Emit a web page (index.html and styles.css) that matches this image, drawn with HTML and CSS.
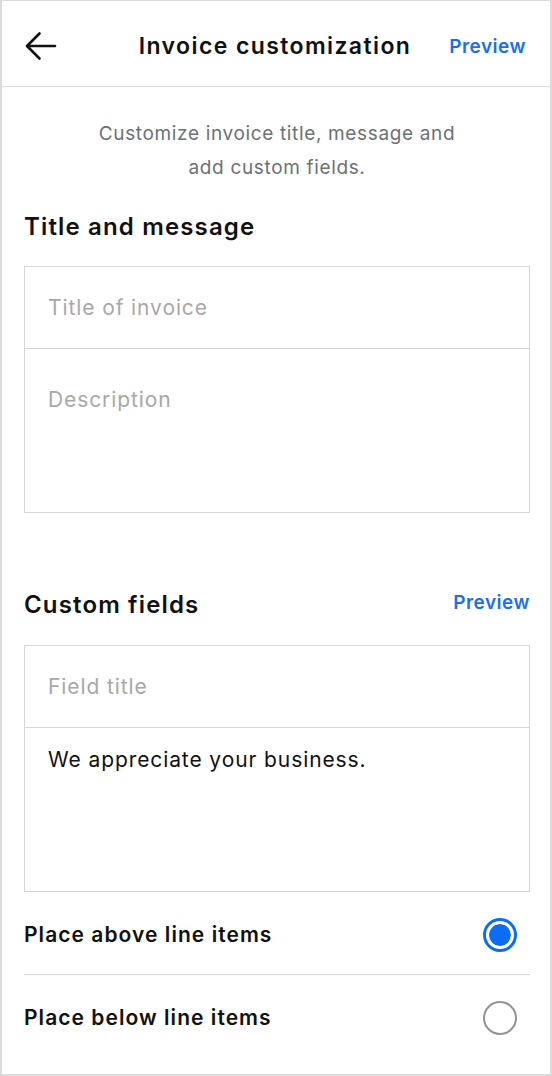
FILE: index.html
```html
<!DOCTYPE html>
<html lang="en">
<head>
  <meta charset="UTF-8"/>
  <meta name="viewport" content="width=device-width, initial-scale=1"/>
  <title>Invoice customization</title>
  <link rel="stylesheet" href="styles.css">
</head>
<body>
  <div class="screen">
    <div class="topbar">
      <svg class="back" width="34" height="34" viewBox="0 0 34 34" fill="none" stroke="#111" stroke-width="2.6" stroke-linecap="round" stroke-linejoin="round">
        <path d="M31 17H3.5M15.5 4.5L3 17l12.5 12.5"/>
      </svg>
      <div class="topbar-title">Invoice customization</div>
      <a class="link" href="#">Preview</a>
    </div>

    <div class="content">
      <p class="intro">Customize invoice title, message and<br>add custom fields.</p>

      <div class="section-head">
        <h3>Title and message</h3>
      </div>
      <div class="field-group">
        <div class="field field-short placeholder">Title of invoice</div>
        <div class="field field-tall placeholder">Description</div>
      </div>

      <div class="section-head section-gap">
        <h3>Custom fields</h3>
        <a class="link link-small" href="#">Preview</a>
      </div>
      <div class="field-group">
        <div class="field field-short placeholder">Field title</div>
        <div class="field field-tall filled">We appreciate your business.</div>
      </div>

      <div class="option-list">
        <div class="option">
          <span>Place above line items</span>
          <span class="radio checked"></span>
        </div>
        <div class="option">
          <span>Place below line items</span>
          <span class="radio"></span>
        </div>
      </div>
    </div>
  </div>
</body>
</html>
```

FILE: styles.css
```css
body { margin: 0; padding: 0; background: #fff; font-family: Inter, 'Noto Sans', Arial, sans-serif; color: #111;}
.screen { width: 552px; height: 1076px; box-sizing: border-box; border: 2px solid #dcdcdc; border-top-width: 1px; overflow: hidden;}

.topbar { height: 86px; box-sizing: border-box; padding: 5px 24px 0 22px; border-bottom: 1px solid #dcdcdc; display: grid; grid-template-columns: 1fr auto 1fr; align-items: center;}
.back { display: block;}
.topbar-title { text-align: center; font-size: 23px; font-weight: 600; letter-spacing: 1.4px;}
.link { color: #1a6ff0; text-decoration: none; font-weight: 600; font-size: 19px; letter-spacing: 0.5px; justify-self: end;}

.content { padding: 0 20px 0 22px;}
.intro { margin: 30px 0 0 0; text-align: center; font-size: 19px; line-height: 34px; letter-spacing: 0.65px; color: #6c7176;}

.section-head { display: flex; justify-content: space-between; align-items: center; margin-top: 23px; height: 36px;}
.section-head h3 { margin: 0; font-size: 24px; font-weight: 600; letter-spacing: 1.15px;}
.section-gap { margin-top: 73px;}
.section-gap .link { margin-top: -4px;}

.field-group { margin-top: 22px; border: 1px solid #d6d6d6;}
.section-gap + .field-group { margin-top: 23px;}
.field { font-size: 21px; letter-spacing: 0.9px; padding: 0 23px;}
.field-short { height: 81px; line-height: 81px; border-bottom: 1px solid #d6d6d6;}
.field-tall { height: 163px; padding-top: 38px; box-sizing: border-box;}
.field-tall.filled { padding-top: 19px;}
.placeholder { color: #a8a8a8;}

.option { display: flex; justify-content: space-between; align-items: center; height: 83px; box-sizing: border-box; padding-top: 3px; font-size: 21px; font-weight: 600; letter-spacing: 1.05px; border-bottom: 1px solid #d6d6d6;}
.option:last-child { border-bottom: none; padding-top: 2px;}
.radio { width: 34px; height: 34px; box-sizing: border-box; border-radius: 50%; border: 2.5px solid #8f9396; margin-right: 13px;}
.radio.checked { border: 3px solid #0b6cf5; padding: 3px; background: #0b6cf5; background-clip: content-box; box-shadow: inset 0 0 0 3px #fff;}
```
